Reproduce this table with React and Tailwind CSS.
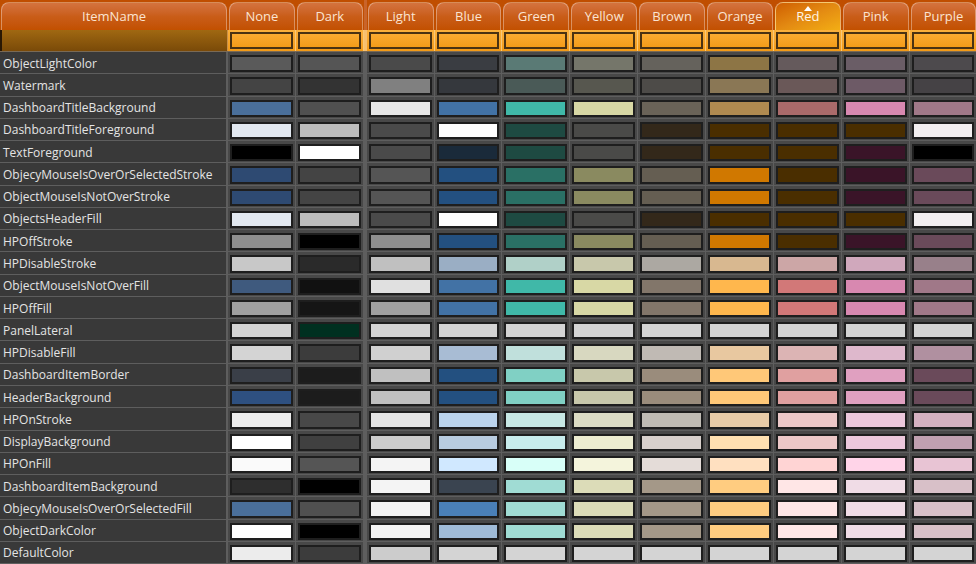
import React from "react";

const COLS = ["None", "Dark", "Light", "Blue", "Green", "Yellow", "Brown", "Orange", "Red", "Pink", "Purple"];

const ROWS = [
  ["ObjectLightColor", ["#5a5a5a", "#555555", "#4a4a4a", "#3a3d42", "#5a7a75", "#75766a", "#65625c", "#8d7545", "#655a5c", "#6a5d66", "#4d4a4d"]],
  ["Watermark", ["#444444", "#333333", "#808080", "#35383d", "#4a5a57", "#57574f", "#4d4b48", "#8a7755", "#6a5858", "#6d5a66", "#454245"]],
  ["DashboardTitleBackground", ["#4a6f9a", "#505050", "#e6e6e6", "#4272a5", "#40b8a8", "#d8d8a5", "#6a6358", "#b08a50", "#aa6a6a", "#d888b0", "#a07888"]],
  ["DashboardTitleForeground", ["#e2e8f0", "#bdbdbd", "#4a4a4a", "#ffffff", "#1e4a42", "#4a4a48", "#33281a", "#4a2e00", "#4a2e00", "#4a2e00", "#f2eef0"]],
  ["TextForeground", ["#000000", "#ffffff", "#4a4a4a", "#1a2a3a", "#1e4a42", "#4a4a48", "#33281a", "#4a2e00", "#4a2e00", "#3a1428", "#000000"]],
  ["ObjecyMouseIsOverOrSelectedStroke", ["#2e4a72", "#444444", "#555555", "#235080", "#2a7065", "#8a8a60", "#655e52", "#d07800", "#4a2e00", "#3a1428", "#6a4a5a"]],
  ["ObjectMouseIsNotOverStroke", ["#2e4a72", "#444444", "#555555", "#235080", "#2a7065", "#8a8a60", "#655e52", "#d07800", "#4a2e00", "#3a1428", "#6a4a5a"]],
  ["ObjectsHeaderFill", ["#e2e8f0", "#bdbdbd", "#4a4a4a", "#ffffff", "#1e4a42", "#4a4a48", "#33281a", "#4a2e00", "#4a2e00", "#4a2e00", "#f2eef0"]],
  ["HPOffStroke", ["#8f8f8f", "#000000", "#8f8f8f", "#235080", "#2a7065", "#8a8a60", "#655e52", "#d07800", "#4a2e00", "#3a1428", "#6a4a5a"]],
  ["HPDisableStroke", ["#c8c8c8", "#2a2a2a", "#c0c0c0", "#9aaec4", "#b0d0c8", "#c8c8ab", "#aca8a2", "#d8b890", "#cca6a6", "#d0a8bc", "#98808a"]],
  ["ObjectMouseIsNotOverFill", ["#3f5a7e", "#111111", "#e0e0e0", "#4272a5", "#40b8a8", "#d8d8a5", "#82766a", "#ffb74d", "#d27878", "#d888b0", "#a07888"]],
  ["HPOffFill", ["#a0a0a0", "#151515", "#a0a0a0", "#4272a5", "#40b8a8", "#d8d8a5", "#82766a", "#ffb74d", "#d27878", "#d888b0", "#a07888"]],
  ["PanelLateral", ["#d4d4d4", "#003020", "#d4d4d4", "#d4d4d4", "#d4d4d4", "#d4d4d4", "#d4d4d4", "#d4d4d4", "#d4d4d4", "#d4d4d4", "#d4d4d4"]],
  ["HPDisableFill", ["#d4d4d4", "#3c3c3c", "#d0d0d0", "#a8bcd4", "#c0e0dc", "#d8d8c0", "#c0bab4", "#e8c8a0", "#dcb4b4", "#deb8cc", "#b090a0"]],
  ["DashboardItemBorder", ["#3a3f48", "#1c1c1c", "#c0c0c0", "#235080", "#80d0c4", "#c8c8ab", "#9a8c7c", "#ffc878", "#e0a0a0", "#e0a0c0", "#6a4a5a"]],
  ["HeaderBackground", ["#2e5080", "#1c1c1c", "#c0c0c0", "#235080", "#80d0c4", "#c8c8ab", "#9a8c7c", "#ffc878", "#e0a0a0", "#e0a0c0", "#6a4a5a"]],
  ["HPOnStroke", ["#ececec", "#484848", "#e4e4e4", "#bcd4ec", "#c8e8e4", "#dcdcc4", "#c0bcb4", "#e8cca8", "#ecc8c8", "#ecc8dc", "#d4b0c0"]],
  ["DisplayBackground", ["#ffffff", "#404040", "#cccccc", "#b8cce0", "#c8ecec", "#ececd0", "#d8d0cc", "#ffe0b0", "#ecc8c8", "#ecc8dc", "#c0a0b0"]],
  ["HPOnFill", ["#fafafa", "#555555", "#f4f4f4", "#d0e8ff", "#d8fff8", "#f4f4dc", "#e4dcd8", "#ffe0c0", "#ffd4d4", "#ffd4e8", "#e8c4d4"]],
  ["DashboardItemBackground", ["#2e2e2e", "#000000", "#f4f4f4", "#3a4450", "#a0dcd4", "#dcdcb8", "#a49888", "#ffcc80", "#ffe6e6", "#f0dce6", "#d8c0c8"]],
  ["ObjecyMouseIsOverOrSelectedFill", ["#4a6f9a", "#505050", "#f4f4f4", "#4a80b8", "#a0dcd4", "#dcdcb8", "#a49888", "#ffcc80", "#ffe6e6", "#f0dce6", "#d8c0c8"]],
  ["ObjectDarkColor", ["#ffffff", "#000000", "#f4f4f4", "#a0bcd8", "#a0dcd4", "#dcdcb8", "#a49888", "#ffcc80", "#ffe6e6", "#f0dce6", "#d8c0c8"]],
  ["DefaultColor", ["#ececec", "#3c3c3c", "#cccccc", "#d4d4d4", "#d4d4d4", "#d4d4d4", "#d4d4d4", "#d4d4d4", "#d4d4d4", "#d4d4d4", "#d4d4d4"]],
];

function Tab({ label, active }) {
  if (active) {
    return (
      <div className="relative mx-[1px] mt-[2px] flex h-[28px] flex-1 items-center justify-center rounded-t-[8px] border border-b-0 border-white/40 bg-gradient-to-br from-[#cf5e02] via-[#e38a12] to-[#f3ae14] text-[13px] text-[#fff4e6]">
        <div className="absolute left-1/2 top-[3px] h-0 w-0 -translate-x-1/2 border-b-[5px] border-l-[4px] border-r-[4px] border-b-white border-l-transparent border-r-transparent" />
        <span className="mt-[1px]">{label}</span>
      </div>
    );
  }
  return (
    <div className="mx-[1px] mt-[2px] flex h-[28px] flex-1 items-center justify-center rounded-t-[8px] border border-b-0 border-white/35 bg-gradient-to-b from-[#d4733e] via-[#c95d18] to-[#c25000] text-[13px] text-[#fbe4d2]">
      <span className="mt-[1px]">{label}</span>
    </div>
  );
}

function Swatch({ color }) {
  return <div className="h-full w-full border-2 border-[#1e1e1e]" style={{ backgroundColor: color }} />;
}

export default function App() {
  return (
    <div className="h-[564px] w-[976px] overflow-hidden bg-[#3a3a3a] font-['Open_Sans',sans-serif]">
      <div className="flex h-[564px] w-[980px] flex-col">
        {/* header */}
        <div className="flex h-[30px] shrink-0 bg-[#c04e00]">
          <div className="flex w-[228px] shrink-0">
            <Tab label="ItemName" />
          </div>
          {COLS.map((c, i) => (
            <React.Fragment key={c}>
              {i === 2 && <div className="w-[3px] shrink-0 bg-[#c9642a]" />}
              <div className="flex w-[67.86px] shrink-0">
                <Tab label={c} active={c === "Red"} />
              </div>
            </React.Fragment>
          ))}
        </div>
        {/* filter row */}
        <div className="flex h-[22px] shrink-0 border-b border-[#7a6a55]">
          <div className="w-[228px] shrink-0 border-l-2 border-r border-l-[#2a1804] border-r-[#c8904a] bg-gradient-to-b from-[#a06812] to-[#7a4a08]" />
          {COLS.map((c, i) => (
            <React.Fragment key={c}>
              {i === 2 && <div className="w-[3px] shrink-0 bg-[#f7c070]" />}
              <div className="w-[67.86px] shrink-0 border-r border-[#f8c878] bg-gradient-to-b from-[#fbb03c] to-[#f29a16] px-[2px] py-[2px]">
                <div className="h-full w-full border-2 border-[#4a3212] bg-gradient-to-b from-[#fbab30] to-[#f49c18]" />
              </div>
            </React.Fragment>
          ))}
        </div>
        {/* data rows */}
        {ROWS.map(([name, colors]) => (
          <div key={name} className="flex min-h-0 flex-1 border-b border-[#5e5e5e]">
            <div className="flex w-[228px] shrink-0 items-center border-r-2 border-[#5e5e5e] bg-[#393939] pl-[3px] pt-[2px] text-[12px] leading-none text-[#e4e4e4]">
              {name}
            </div>
            {colors.map((col, i) => (
              <React.Fragment key={i}>
                {i === 2 && <div className="w-[3px] shrink-0 bg-[#5e5e5e]" />}
                <div className="w-[67.86px] shrink-0 border-r border-[#5e5e5e] bg-[#484848] pb-[1px] pl-[2px] pr-[2px] pt-[3px]">
                  <Swatch color={col} />
                </div>
              </React.Fragment>
            ))}
          </div>
        ))}
      </div>
    </div>
  );
}
